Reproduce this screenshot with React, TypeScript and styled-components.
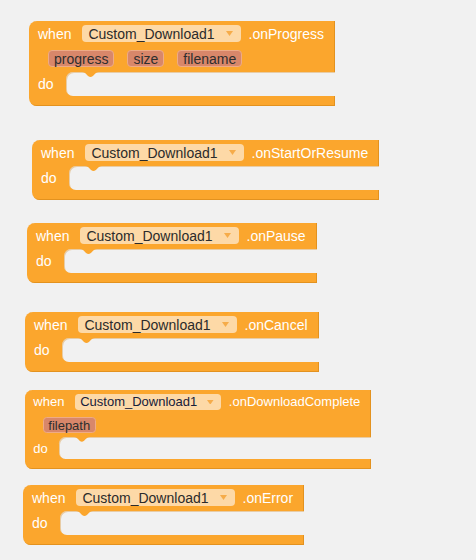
import React from 'react'
import styled, { createGlobalStyle } from 'styled-components'

const ORANGE = '#fba62d'
const EDGE = '#e3921f'
const CANVAS = '#f1f1f1'

// sizes are measured at 14px, written in em so a block can be drawn smaller
const u = (n: number) => `${(n / 14).toFixed(4)}em`

const GlobalStyle = createGlobalStyle`
  html, body {
    margin: 0;
    padding: 0;
    background: ${CANVAS};
  }
  body {
    font-family: 'Liberation Sans', Arial, sans-serif;
  }
`

const Workspace = styled.div`
  display: flex;
  flex-direction: column;
  align-items: flex-start;
  width: 476px;
  height: 560px;
  overflow: hidden;
  background: ${CANVAS};
`

const Block = styled.div<{ $x: number; $top: number; $size: number }>`
  display: inline-flex;
  flex-direction: column;
  margin: ${p => p.$top}px 0 0 ${p => p.$x}px;
  font-size: ${p => p.$size}px;
  line-height: 1;
  color: #fff;
  white-space: nowrap;
`

const Header = styled.div`
  display: flex;
  flex-direction: column;
  gap: ${u(7)};
  padding: ${u(4)} ${u(11)} ${u(4)} ${u(9)};
  background: ${ORANGE};
  border-top-left-radius: ${u(8)};
  box-shadow: inset -1px 0 0 ${EDGE};
`

const Row = styled.div<{ $indent?: number }>`
  display: flex;
  align-items: center;
  gap: ${p => (p.$indent ? u(13) : 0)};
  height: ${u(18)};
  padding-left: ${p => u(p.$indent ?? 0)};
`

const Dropdown = styled.span<{ $ink?: string }>`
  display: inline-flex;
  align-items: center;
  height: ${u(17)};
  padding: 0 ${u(8)} 0 ${u(6)};
  margin: 0 ${u(8)} 0 ${u(11)};
  background: #fdd9a7;
  border-radius: ${u(4)};
  color: ${p => p.$ink ?? '#2b2b2b'};
`

const Caret = styled.svg`
  width: ${u(7)};
  height: ${u(5)};
  margin-left: ${u(11)};
`

const Param = styled.span`
  display: inline-flex;
  align-items: center;
  box-sizing: border-box;
  height: ${u(17)};
  padding: 0 ${u(5)};
  background: #d8876a;
  border: 1px solid #eeab86;
  border-radius: ${u(4)};
  color: #2e2e2e;
`

const Body = styled.div`
  display: flex;
  height: ${u(24)};
  background: ${ORANGE};
`

const Arm = styled.div`
  display: flex;
  align-items: center;
  box-sizing: border-box;
  width: ${u(37)};
  padding-left: ${u(9)};
`

const Slot = styled.div`
  position: relative;
  flex: 1;
  background: ${CANVAS};
  border-radius: ${u(7)} 0 0 ${u(7)};
  box-shadow: inset 1px 1px 0 rgba(214, 134, 24, 0.35);
`

const Notch = styled.svg`
  position: absolute;
  top: 0;
  left: ${u(16)};
  width: ${u(17)};
  height: ${u(5)};
`

const Footer = styled.div`
  height: ${u(10)};
  background: ${ORANGE};
  border-bottom-left-radius: ${u(8)};
  box-shadow: inset -1px -1px 0 ${EDGE};
`

type EventBlock = {
  x: number
  top: number
  event: string
  params?: string[]
  size?: number
  ink?: string
}

const blocks: EventBlock[] = [
  { x: 29, top: 21, event: 'onProgress', params: ['progress', 'size', 'filename'] },
  { x: 32, top: 34, event: 'onStartOrResume' },
  { x: 27, top: 23, event: 'onPause' },
  { x: 25, top: 29, event: 'onCancel' },
  { x: 25, top: 18, event: 'onDownloadComplete', params: ['filepath'], size: 13, ink: '#16203a' },
  { x: 23, top: 16, event: 'onError' },
]

const WhenBlock = ({ x, top, event, params, size = 14, ink }: EventBlock) => (
  <Block $x={x} $top={top} $size={size}>
    <Header>
      <Row>
        when
        <Dropdown $ink={ink}>
          Custom_Download1
          <Caret viewBox="0 0 7 5">
            <path d="M0 0 H7 L3.5 5 Z" fill="#f6ac4a" />
          </Caret>
        </Dropdown>
        .{event}
      </Row>
      {params && (
        <Row $indent={10}>
          {params.map(name => (
            <Param key={name}>{name}</Param>
          ))}
        </Row>
      )}
    </Header>
    <Body>
      <Arm>do</Arm>
      <Slot>
        <Notch viewBox="0 0 17 5">
          <path d="M0 0 C4 0 5.5 5 8.5 5 C11.5 5 13 0 17 0 Z" fill={ORANGE} />
        </Notch>
      </Slot>
    </Body>
    <Footer />
  </Block>
)

export default function App() {
  return (
    <>
      <GlobalStyle />
      <Workspace>
        {blocks.map(b => (
          <WhenBlock key={b.event} {...b} />
        ))}
      </Workspace>
    </>
  )
}
